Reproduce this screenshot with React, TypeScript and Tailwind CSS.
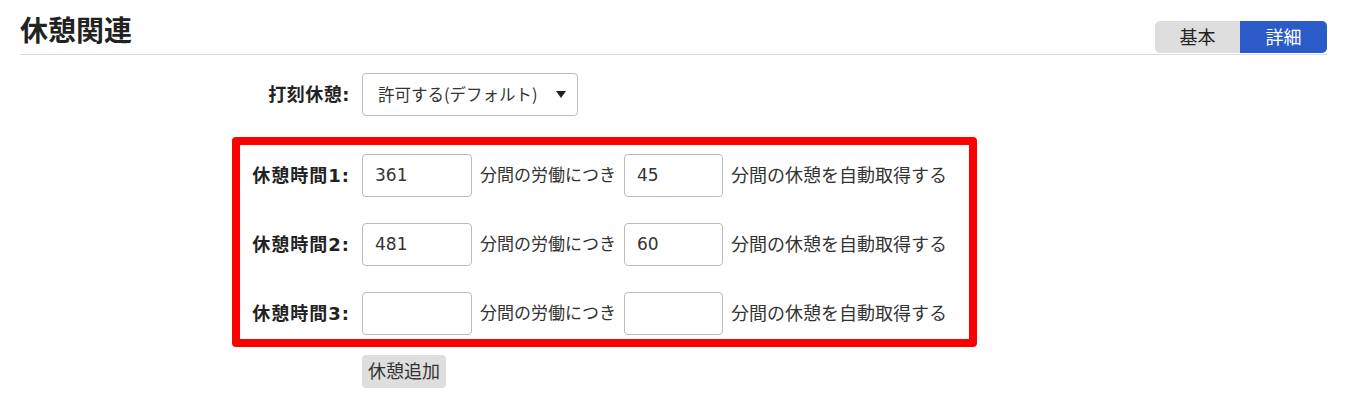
import React from 'react';

const FONT = { fontFamily: '"DejaVu Sans", "Noto Sans CJK JP", sans-serif' };
const CJK = { fontFamily: '"Noto Sans CJK JP", sans-serif' };

interface BreakRow {
  label: string;
  work: string;
  rest: string;
}

const rows: BreakRow[] = [
  { label: '休憩時間1:', work: '361', rest: '45' },
  { label: '休憩時間2:', work: '481', rest: '60' },
  { label: '休憩時間3:', work: '', rest: '' },
];

export default function App() {
  return (
    <div className="min-h-[419px] bg-white pl-5 pr-[33px] text-[#333]" style={FONT}>
      {/* Header */}
      <div className="flex items-end justify-between border-b border-[#dcdcdc] pt-[14px]">
        <h2 className="pb-[4px] text-[28px] font-bold leading-[36px] text-[#222]">休憩関連</h2>
        <div className="mb-px flex h-8 overflow-hidden rounded-[5px] text-[18px]">
          <button className="w-[85px] bg-[#dedede] text-[#222]">基本</button>
          <button className="w-[87px] bg-[#2a5bc8] text-white">詳細</button>
        </div>
      </div>

      {/* Stamp break */}
      <div className="ml-[220px] mt-[18px] flex items-center gap-3">
        <div className="w-[110px] text-right text-[18px] font-bold tracking-[0.5px] text-[#222]">打刻休憩:</div>
        <div className="flex h-[43px] w-[216px] items-center justify-between rounded-[4px] border border-[#bbb] pl-[15px] pr-[11px]">
          <span className="text-[16.5px]" style={CJK}>許可する(デフォルト)</span>
          <svg width="10" height="7" viewBox="0 0 10 7">
            <path d="M0 0h10L5 7z" fill="#222" />
          </svg>
        </div>
      </div>

      {/* Break rows */}
      <div className="ml-[212px] mt-[21px] w-fit rounded-[4px] border-[8px] border-[#ff0000] pb-[4px] pr-[22px] pt-[9px]">
        <div className="flex flex-col gap-[26px]">
          {rows.map((r) => (
            <div key={r.label} className="flex items-center">
              <div className="w-[110px] text-right text-[18px] font-bold tracking-[1px] text-[#222]">{r.label}</div>
              <div className="ml-3 flex h-[43px] w-[110px] items-center rounded-[4px] border border-[#bbb] px-3 text-[17px]">
                {r.work}
              </div>
              <span className="ml-2 text-[17px]">分間の労働につき</span>
              <div className="ml-2 flex h-[43px] w-[99px] items-center rounded-[4px] border border-[#bbb] px-3 text-[17px]">
                {r.rest}
              </div>
              <span className="ml-2 text-[18px]">分間の休憩を自動取得する</span>
            </div>
          ))}
        </div>
      </div>

      <div className="ml-[342px] mt-2">
        <button className="h-[33px] w-[84px] rounded-[4px] bg-[#dedede] text-[18px] text-[#333]">休憩追加</button>
      </div>
    </div>
  );
}
